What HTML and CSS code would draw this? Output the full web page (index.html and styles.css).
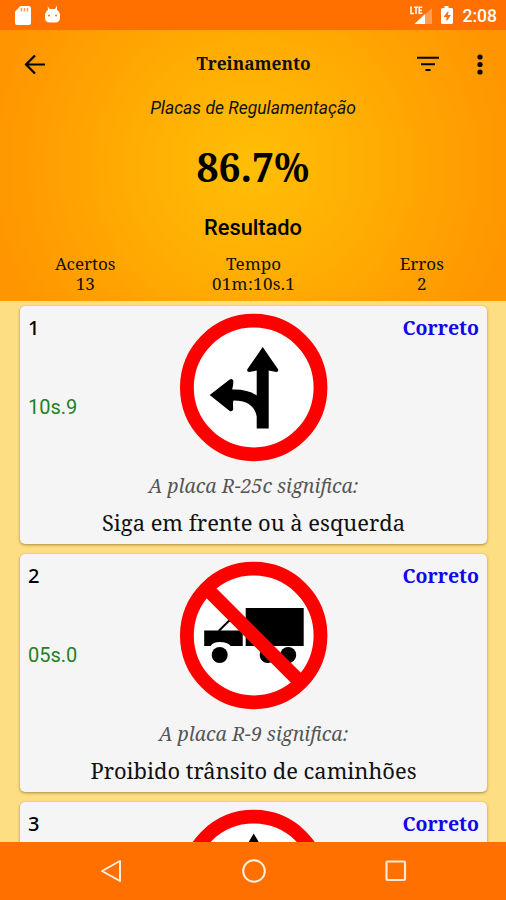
FILE: index.html
```html
<!DOCTYPE html>
<html lang="pt-BR">
<head>
<meta charset="utf-8">
<title>Treinamento</title>
<link rel="stylesheet" href="styles.css">
</head>
<body>
<div class="screen">
  <div class="status">
    <svg class="status-left" width="64" height="30" viewBox="0 0 64 30">
      <path fill="#fff" d="M20.500 6h8.500q2 0 2 2v15q0 2-2 2h-12q-2 0-2-2v-11.500z"/>
      <path stroke="#ff9d55" stroke-width="1.500" d="M21.500 8v3.500M24.500 8v3.500M27.500 8v3.500"/>
      <path fill="#fff" d="M47.500 5.500l2 3.500h5.500l2-3.500v4.500q3 2 3 5.500v2q0 5-5 5h-5q-5 0-5-5v-2q0-3.500 3-5.500z"/>
      <circle cx="49" cy="15.500" r="1" fill="#ff7000"/><circle cx="56" cy="15.500" r="1" fill="#ff7000"/>
    </svg>
    <div class="status-right">
      <svg width="48" height="30" viewBox="0 0 48 30">
        <path fill="#ff9e55" d="M22 8v16h-7V14.500z"/>
        <path fill="#fff" d="M15 14v10H4.500z"/>
        <path fill="none" stroke="#fff" stroke-width="1.500" d="M1 6.500v7h3M4 7.200h4M6 7v7M12.300 7.200H9.200v6.100h3.100M9.200 10.200h2.600"/>
        <path fill="#fff" d="M34.500 6h4v2h3q1.500 0 1.500 1.500v13q0 1.500-1.500 1.500h-9q-1.500 0-1.500-1.500v-13q0-1.500 1.500-1.500h2z"/>
        <path fill="#ff7000" d="M38.500 10.500l-5 6.500h3v4.500l4.500-6.500h-3z"/>
      </svg>
      <span class="clock">2:08</span>
    </div>
  </div>
  <header class="header">
    <div class="toolbar">
      <svg width="24" height="24" viewBox="0 0 24 24"><path fill="none" stroke="#000" stroke-width="2.200" d="M22 12.500H4M12 3.500l-9 9 9 9"/></svg>
      <h1 class="title">Treinamento</h1>
      <div class="actions">
        <svg width="24" height="24" viewBox="0 0 24 24"><path stroke="#000" stroke-width="2" d="M1 5.700h22M5 12.200h14M9.500 18h5"/></svg>
        <svg width="8" height="24" viewBox="0 0 8 24"><circle cx="4" cy="5" r="2.600"/><circle cx="4" cy="12.500" r="2.600"/><circle cx="4" cy="20" r="2.600"/></svg>
      </div>
    </div>
    <div class="subtitle">Placas de Regulamentação</div>
    <div class="score">86.7%</div>
    <div class="result">Resultado</div>
    <div class="stats">
      <div>Acertos<br>13</div>
      <div>Tempo<br><span class="total">01m:10s.1</span></div>
      <div>Erros<br>2</div>
    </div>
  </header>
  <main class="list">
    <article class="card">
      <div class="row">
        <div class="side"><span class="number">1</span><span class="time">10s.9</span></div>
        <svg class="sign" width="148" height="148" viewBox="0.300 0.500 148 148">
          <circle cx="74" cy="74" r="66.800" fill="#fff" stroke="#f00" stroke-width="13.800"/>
          <path d="M83 33.500l15.500 22.500q.5 2.500-2 2.500l-7.500-1.500v58H77V103Q74 87 54 87q-1 0-.5 9-1 2.500-3.500 1.500L30 81.500l20-15.500q2.500-1.500 3.500 1 .5 3-1 9Q68 75.500 77 82V57l-7.500 1.500q-2.500 0-2-2.500z"/>
        </svg>
        <div class="verdict">Correto</div>
      </div>
      <div class="question">A placa R-25c significa:</div>
      <div class="answer">Siga em frente ou à esquerda</div>
    </article>
    <article class="card">
      <div class="row">
        <div class="side"><span class="number">2</span><span class="time">05s.0</span></div>
        <svg class="sign" width="148" height="148" viewBox="0.300 0.500 148 148">
          <circle cx="74" cy="74" r="66.800" fill="#fff" stroke="#f00" stroke-width="13.800"/>
          <path d="M66 46.500h58v38H66zM24.500 69h38.500v15.500H51q-3-4-11-4-7 0-9 4h-6.500z"/>
          <path fill="none" stroke="#000" stroke-width="2" d="M39 69.500l10-10h12"/>
          <circle cx="40" cy="93.500" r="8"/><circle cx="88" cy="93.500" r="8"/><circle cx="108.500" cy="93.500" r="8"/>
          <path stroke="#f00" stroke-width="14" d="M27 27l94 94"/>
        </svg>
        <div class="verdict">Correto</div>
      </div>
      <div class="question">A placa R-9 significa:</div>
      <div class="answer">Proibido trânsito de caminhões</div>
    </article>
    <article class="card">
      <div class="row">
        <div class="side"><span class="number">3</span></div>
        <svg class="sign" width="148" height="148" viewBox="0.300 0.500 148 148">
          <circle cx="74" cy="74" r="66.800" fill="#fff" stroke="#f00" stroke-width="13.800"/>
          <path d="M74 24l13 22H61z"/>
        </svg>
        <div class="verdict">Correto</div>
      </div>
    </article>
  </main>
  <nav class="nav">
    <svg width="24" height="24" viewBox="0 0 24 24"><path fill="none" stroke="#fff0df" stroke-width="2" stroke-linejoin="round" d="M21 2v20L3 12z"/></svg>
    <svg width="24" height="24" viewBox="0 0 24 24"><circle cx="12" cy="12" r="10.800" fill="none" stroke="#fff0df" stroke-width="2"/></svg>
    <svg width="24" height="24" viewBox="0 0 24 24"><rect x="2.500" y="2.500" width="18.500" height="18.500" rx="1" fill="none" stroke="#ffe9d5" stroke-width="2.200"/></svg>
  </nav>
</div>
</body>
</html>
```
FILE: styles.css
```css
* { box-sizing: border-box; }
body { margin: 0; color: #111; font-family: "Noto Serif", "DejaVu Serif Condensed", "DejaVu Serif", serif; }
svg { display: block; flex: none; }
.screen { width: 506px; height: 900px; display: flex; flex-direction: column; overflow: hidden; }
.status { height: 30px; flex: none; display: flex; justify-content: space-between; background: #ff7000; }
.status-right { display: flex; align-items: center; padding-right: 9px; }
.clock { width: 39px; padding-top: 2px; text-align: right; white-space: nowrap; color: #fff; font: 500 17.5px/28px Roboto, sans-serif; }
.header { height: 271px; flex: none; background: radial-gradient(circle 268px at 50% 50%, #ffbf05, #ff9500); }
.toolbar { height: 68px; padding: 0 22px 0 23px; display: grid; grid-template-columns: 90px 1fr 90px; align-items: center; }
.title { margin: 0; padding-bottom: 1px; font-size: 17.3px; line-height: 24px; font-weight: bold; text-align: center; }
.actions { display: flex; justify-content: flex-end; gap: 36px; }
.subtitle { height: 20px; font: italic 17.5px/20px Roboto, sans-serif; text-align: center; }
.score { height: 60px; margin-top: 19px; font-size: 39px; line-height: 60px; font-weight: bold; text-align: center; color: #000; }
.result { height: 28px; margin-top: 17px; font: 500 21.8px/28px Roboto, sans-serif; text-align: center; color: #000; }
.stats { margin-top: 12px; padding-left: 1px; display: grid; grid-template-columns: repeat(3, 1fr); text-align: center; font-size: 17px; line-height: 20px; }
.total { letter-spacing: .3px; }
.list { flex: 1; min-height: 0; overflow: hidden; padding: 5px 19px 0 20px; display: flex; flex-direction: column; gap: 10px; background: #fede82; }
.card { height: 238px; flex: none; padding: 8px; border-radius: 5px; background: #f5f5f5; box-shadow: 0 1px 3px rgba(80, 60, 10, .5); }
.row { height: 148px; display: grid; grid-template-columns: 1fr 148px 1fr; }
.sign { overflow: visible; }
.side { display: flex; flex-direction: column; }
.number { height: 28px; font: 500 20px/28px "Noto Sans", sans-serif; color: #000; }
.time { margin-top: 51px; font: 20px/28px Roboto, sans-serif; color: #238023; }
.verdict { height: 28px; font-size: 19.5px; line-height: 28px; font-weight: bold; color: #1008ea; text-align: right; }
.question { height: 28px; margin-top: 10px; font-size: 19.5px; line-height: 28px; font-style: italic; color: #555; text-align: center; white-space: nowrap; }
.answer { height: 32px; margin-top: 7px; font-size: 21.9px; line-height: 32px; text-align: center; white-space: nowrap; }
.nav { height: 58px; flex: none; padding: 0 98px 0 99px; display: flex; align-items: center; justify-content: space-between; background: #ff7000; }
```
